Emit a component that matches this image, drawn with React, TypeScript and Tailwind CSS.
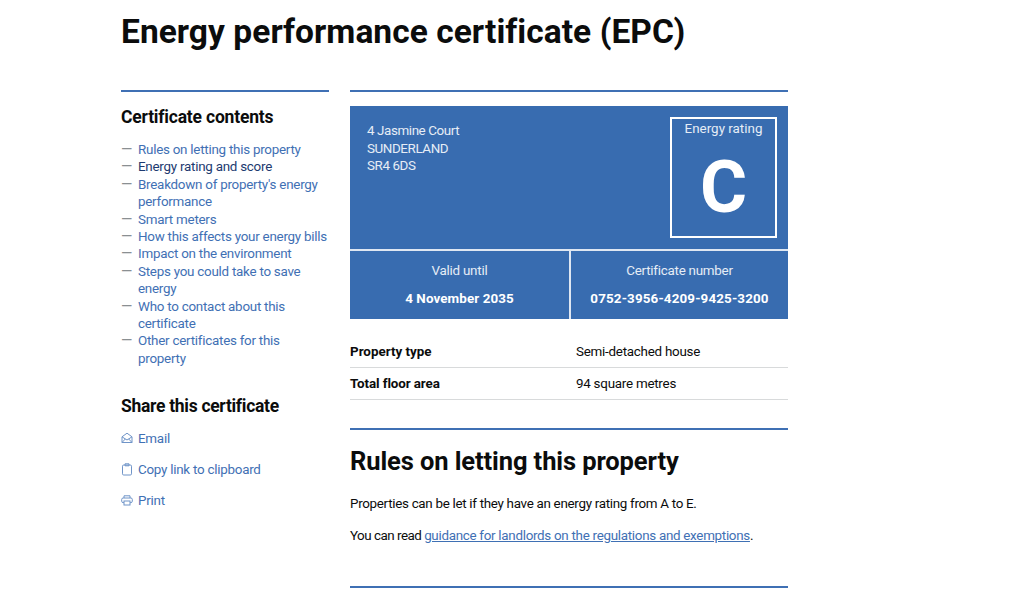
const font = "[font-family:Roboto,'Liberation_Sans',sans-serif]";

const contents = [
  "Rules on letting this property",
  "Energy rating and score",
  "Breakdown of property's energy performance",
  "Smart meters",
  "How this affects your energy bills",
  "Impact on the environment",
  "Steps you could take to save energy",
  "Who to contact about this certificate",
  "Other certificates for this property",
];

function EmailIcon() {
  return (
    <svg width="12" height="12" viewBox="0 0 12 12" fill="none" stroke="#6f94c8" strokeWidth="1" className="-mt-[2px]">
      <path d="M1 4.8 6 1.2l5 3.6v5.7H1z" strokeLinejoin="round" />
      <path d="M1 4.8 6 8l5-3.2M1 10.5l3.4-3.6M11 10.5 7.6 6.9" />
    </svg>
  );
}

function ClipboardIcon() {
  return (
    <svg width="12" height="13" viewBox="0 0 12 13" fill="none" stroke="#6f94c8" strokeWidth="1" className="-mt-[2px]">
      <rect x="1.5" y="2" width="9" height="10" rx="1.2" />
      <path d="M4 2V.8h4V2.8H4z" />
    </svg>
  );
}

function PrintIcon() {
  return (
    <svg width="12" height="11" viewBox="0 0 12 11" fill="none" stroke="#6f94c8" strokeWidth="1" className="-mt-[2px]">
      <path d="M3 3V.8h6V3" />
      <rect x=".7" y="3" width="10.6" height="4.6" rx="1.4" />
      <rect x="3" y="6" width="6" height="4" fill="#fff" />
    </svg>
  );
}

export default function App() {
  return (
    <div className={`${font} h-[591px] overflow-hidden bg-white pl-[121px] w-[1024px] text-[#0b0c0c] text-[13.4px] leading-[17.5px] tracking-[-0.25px]`}>
      <h1 className="pt-[13px] h-[90px] text-[33.5px] leading-[38px] font-bold tracking-[0.05px]">Energy performance certificate (EPC)</h1>

      <div className="flex gap-[21px]">
        <aside className="w-[208px] shrink-0 border-t-2 border-[#3f70b4] pt-[15px]">
          <h2 className="text-[17.5px] leading-[20px] font-bold tracking-[-0.2px]">Certificate contents</h2>
          <ul className="mt-[14px] leading-[17.4px]">
            {contents.map((item, i) => (
              <li key={item} className="flex">
                <span className="w-[17px] shrink-0 text-[14.5px] tracking-normal text-[#8a8f92]">—</span>
                <a className={i === 1 ? "text-[#1d3a70]" : "text-[#3f70b4]"}>{item}</a>
              </li>
            ))}
          </ul>
          <h2 className="mt-[29px] text-[17.5px] leading-[20px] font-bold tracking-[-0.3px]">Share this certificate</h2>
          <div className="mt-[14px] flex flex-col gap-[13.5px] text-[#3f70b4]">
            <a className="flex items-center gap-[5px]"><EmailIcon />Email</a>
            <a className="flex items-center gap-[5px]"><ClipboardIcon />Copy link to clipboard</a>
            <a className="flex items-center gap-[5px]"><PrintIcon />Print</a>
          </div>
        </aside>

        <main className="w-[438px] shrink-0 border-t-2 border-[#3f70b4] pt-[14px]">
          <div className="bg-[#386cb0] text-[#e6edf6]">
            <div className="flex justify-between h-[143px] pl-[17px] pr-[11px] pt-[11px]">
              <p className="pt-[5px] tracking-[-0.4px]">4 Jasmine Court<br />SUNDERLAND<br />SR4 6DS</p>
              <div className="w-[107px] h-[121px] border-2 border-white text-center pt-[1px]">
                <p className="tracking-normal">Energy rating</p>
                <p className="mt-[15px] text-[72px] leading-[70px] font-bold text-white tracking-normal">C</p>
              </div>
            </div>
            <div className="grid grid-cols-[221px_1fr] h-[70px] border-t-2 border-[#dfe7f2] text-center">
              <div className="border-r-2 border-[#dfe7f2] pt-[11px]">
                <p>Valid until</p>
                <p className="mt-[10px] font-bold text-white tracking-[0.1px]">4 November 2035</p>
              </div>
              <div className="pt-[11px]">
                <p>Certificate number</p>
                <p className="mt-[10px] font-bold text-white tracking-[0.15px]">0752-3956-4209-9425-3200</p>
              </div>
            </div>
          </div>

          <dl className="mt-[17px]">
            <div className="flex h-[32px] items-center border-b border-[#d8dadb]">
              <dt className="w-[226px] font-bold tracking-normal">Property type</dt>
              <dd>Semi-detached house</dd>
            </div>
            <div className="flex h-[32px] items-center border-b border-[#d8dadb]">
              <dt className="w-[226px] font-bold tracking-[-0.1px]">Total floor area</dt>
              <dd>94 square metres</dd>
            </div>
          </dl>

          <section className="mt-[28px] border-t-2 border-[#3f70b4] pt-[15px]">
            <h2 className="text-[25.5px] leading-[32px] font-bold tracking-[-0.1px]">Rules on letting this property</h2>
            <p className="mt-[18px] tracking-[-0.3px]">Properties can be let if they have an energy rating from A to E.</p>
            <p className="mt-[14px]"><span className="tracking-[-0.5px]">You can read </span><a className="text-[#3f70b4] underline tracking-[-0.29px]">guidance for landlords on the regulations and exemptions</a>.</p>
          </section>

          <div className="mt-[42px] border-t-2 border-[#3f70b4]" />
        </main>
      </div>
    </div>
  );
}
